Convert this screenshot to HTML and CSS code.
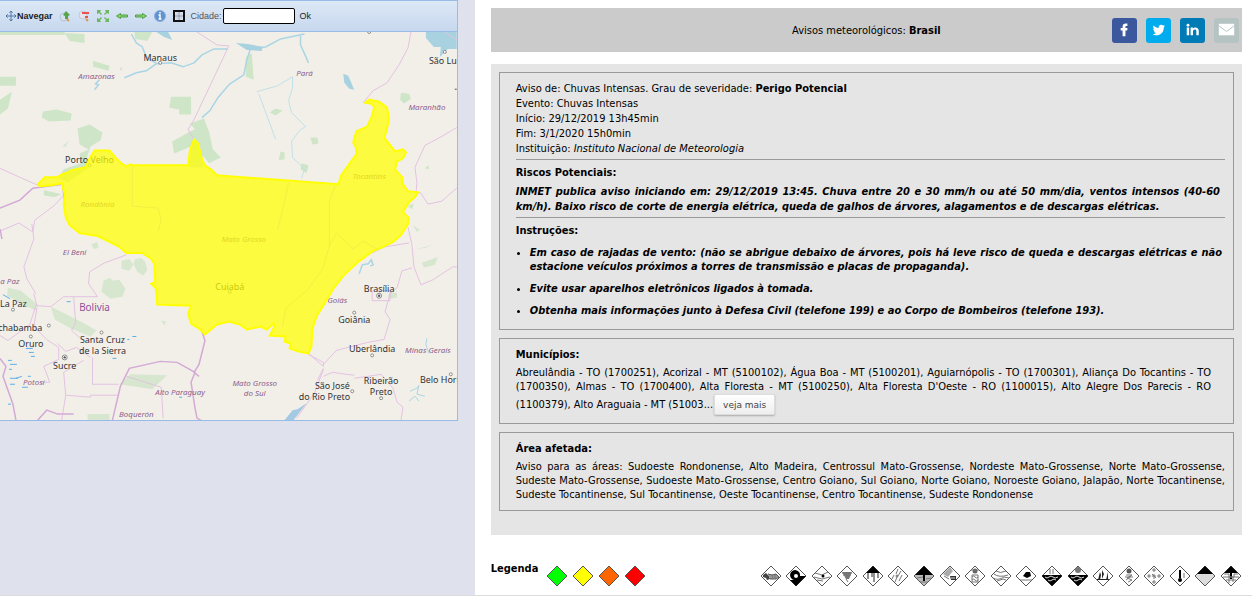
FILE: index.html
```html
<!DOCTYPE html>
<html lang="pt-BR">
<head>
<meta charset="utf-8">
<title>Avisos meteorológicos</title>
<link rel="stylesheet" href="styles.css">
</head>
<body>
<div class="page">
  <section class="map-side">
    <div class="map-widget">
      <div class="toolbar">
        <button class="tool navigate" type="button"><svg width="12" height="12" viewBox="0 0 12 12"><path d="M6 1v10M1 6h10M4.300 2.700 6 1l1.700 1.700M4.300 9.300 6 11l1.700-1.700M2.700 4.300 1 6l1.700 1.700M9.300 4.300 11 6 9.300 7.700" fill="none" stroke="#4c78a8"/></svg>Navegar</button>
        <button class="tool" type="button" aria-label="Aproximar"><svg width="14" height="14" viewBox="0 0 14 14"><circle cx="6" cy="8" r="4" fill="#d5e1ef" stroke="#b5c3d3"/><path d="m9 10 2 2" stroke="#d69a52" stroke-width="2"/><path d="m8 2 4 4-2 1v3H7V7L5 6z" fill="#56a54a"/></svg></button>
        <button class="tool" type="button" aria-label="Afastar"><svg width="14" height="14" viewBox="0 0 14 14"><circle cx="6" cy="6" r="4" fill="#e6e3ec" stroke="#c2c9d8"/><path d="m9 10 2 2" stroke="#d69a52" stroke-width="2"/><path d="M5 4h7M8 8h3" stroke="#ee5050" stroke-width="2"/></svg></button>
        <button class="tool" type="button" aria-label="Extensão total"><svg width="14" height="14" viewBox="0 0 14 14"><path d="M1 5V1h4L4 3l2 2-1 1-2-2zM9 1h4v4l-2-1-2 2-1-1 2-2zM1 9v4h4l-1-2 2-2-1-1-2 2zM13 9v4H9l1-2-2-2 1-1 2 2z" fill="#6cb85a"/></svg></button>
        <button class="tool" type="button" aria-label="Anterior"><svg width="14" height="14" viewBox="0 0 14 14"><path d="m1.500 7 4-2.500V6h7v2h-7v1.500z" fill="#8ed46e" stroke="#4f9f48"/></svg></button>
        <button class="tool" type="button" aria-label="Próximo"><svg width="14" height="14" viewBox="0 0 14 14"><path d="m12.500 7-4-2.500V6h-7v2h7v1.500z" fill="#8ed46e" stroke="#4f9f48"/></svg></button>
        <button class="tool" type="button" aria-label="Informações"><svg width="14" height="14" viewBox="0 0 14 14"><circle cx="7" cy="7" r="5.500" fill="#5f93cf" stroke="#8aaedb"/><path d="M5.500 6H7v4m-1.500 0h3M7 3v1.500" stroke="#fff" stroke-width="1.500" fill="none"/></svg></button>
        <button class="tool" type="button" aria-label="Grade"><svg width="14" height="14" viewBox="0 0 14 14"><path d="M2 2h10v10H2z" fill="#e3eaf3" stroke="#111" stroke-width="2"/><path d="M7 3v8M3 7h8" stroke="#8794a5"/><path d="M5 3v8M9 3v8M3 5h8M3 9h8" stroke="#bcc7d4" stroke-width=".5"/></svg></button>
        <label class="city-label" for="city">Cidade:</label>
        <input class="city" id="city" type="text">
        <button class="tool ok" type="button">Ok</button>
      </div>
      <svg class="map" viewBox="0 32 459 390" preserveAspectRatio="xMinYMin slice" role="img" aria-label="Mapa da área do aviso">
        <g fill="#cfe5c8">
          <path d="M0 32h65v3H0zM65 33l20 1v9l-15-2zM135 32h18l-5 9-12-2zM0 77h16v9H0zM0 100l12-8-4 17-8 6zM43 112l14-2 15 4-1 7-22 1-7-4zM93 61l17 5-1 5-15-4zM172 97h20v18h-12v-5l-10-2zM78 129l12-4 13 8-2 8-10 6-4 12 2 10-21 14-9-4 5-9 17-6-1-10 9-4-9-5zM173 142l18-10 5-2-5-6 14-5 5 13 4 18 8 8-12 6-6-8v12h-14l2-21-17 7zM44 191l18 4-8 3-10-2zM120 69l3-2-1 4zM63 147l6-6-3 6z"/>
          <path d="m247 57 6-4 2 27-8-3zM403 93l8 1 2 5-7 5-4-4zM271 113l6-4 7 2-7 5zM282 152l4 1v7l-6 1zM312 138l7 0 1 6-6 1zM303 164l7 2-2 8-6-4zM427 169l4-3v4zM410 207l6-3-2 6z"/>
          <path d="m92 245 6-2 1 6-5 1zM122 262l8-2 4 6-4 6-8-2zM136 260l6-1 4 4 2 8-4 6-6-4-4-8zM104 282l6-3 4 3 6-1 6 9-3 8-12 2-9-7zM8 289l13 3 17 14-1 6-12-5-18-10zM51 308l12 6 20 10 14 8-6 6-20-8-16-9zM131 376l37 1-15 14-33-5zM88 416h22v7H88zM162 322l5 1-2 4zM424 264l16-6-3 8-11 3zM391 294l8 0v5l-9 1zM415 226l7 5-3 2zM418 250l17-4-8 3z" opacity=".8"/>
        </g>
        <g fill="none" stroke="#a9d5e4" stroke-width="1.500">
          <path d="m125 78 12-5 10-2 10-7 15-1 12 4 11-4 8-8 12-6 14 0M132 34l5 9 6 4 4 10 11 7M203 118l8-7 8-13 11-13M100 80l-4 4 3 1-4 5"/>
          <path d="m230 85 15-10 3-15 4-12 15-1 15-8 24-5M302 36l0 9 5 11 3 7"/>
          <path d="M258 92l21-6 15-9v11l-4 13 3 12 14 14-6 4-8 11 1 16 12 12-3 9M260 94l9 24 8 22" stroke="#bfe0e8" stroke-width="1"/>
          <path d="m361 275 3-9 6-1 3-4 2 5-3 1"/><path d="m431 355-3-9 1-6M412 393l7-3 2-3-2 9 8 2M411 403l6-5 4 5" stroke-width="1"/>
        </g>
        <path d="m237 43 12 1 15 3-1 4-15-1zM345 74l5 2 6 14-5-1-5-6zM428 32h31v17l-9 0-8 8 1-10-7 0-8-9zM157 32h12l4 8-8-3z" fill="#a8d2df"/>
        <path d="M26 350h7M29 354h5M31 358h4M8 362h4M10 366h7M9 371h3M10 380h8M16 380l6-2M10 386h5M22 389h6M28 378h3M133 338h4M113 360h4M128 341h2M8 406h3M3 296l7 4M67 303h4M180 399h3" fill="none" stroke="#5aaeea"/>
        <g fill="none" stroke="#e3c2e2" stroke-width="1">
          <path d="M198 32l20 13 12 1-35 74-6 10 6 10M413 32l-3 16-9 17-12 18-14 8-10 12M459 128l-17 10-15 8-10 22 2 16-1 9 5 1 7 11 14-3 9-8 6-5M447 32l12 8M0 169l20 9 18 8M64 196l-9 10-20 15-2 12-14-9-19 8M32 225l2 15-10 28 3 12 9 15M34 295l3 12 14 1 13-10H98l-9-13 1-12 15-9 22-8M74 298l2 26-4 8 9 8M36 307l-6 19-22 16-8-5M37 310l-3 18 13 13 12 8 0 12-15 7 6 16-9 0M58 345l8 8 11-4 14 10M93 359v27h26M62 422l4-25 25 2 0-2h28M66 397l-2-23 20-12M127 378l35 11 2 31"/>
          <path d="m270 338 0 0M310 356l15 8 0 4M325 366l13-14 31-8 17-3 6-20-5-8 5-18 7-6 5-17 10-3M410 228l4 18 2 22 7 18 12-5 20-13 4 0M374 254l12-6 25-4M374 292v10h18v-10h-14M325 378l9-4 22 3M325 371l-9 24-18 25M356 380l27-4 12 14 4 14 6 5-2 13M311 356l14 12M325 370l-6 12"/>
        </g>
        <path d="m0 209 20-8 13-12 30-4 2 22M0 360l6 8-3 10 10 28 3 16M38 422l9-10 11 4 16 0M113 422l8-34 9-18 31-7 17 1 18 10-4 10 4 26 2 10 7 4 23 0M202 330l4 12-6 24-5 8 5 4M0 230l2 10" fill="none" stroke="#d3a9d5" stroke-width="1.500"/>
        <path d="m232 405-13 17h-9l8-10 5-1z" transform="translate(76 0)" fill="#a3c9e3"/>
        <g class="city-name">
          <text x="161" y="61">Manaus</text><text x="90" y="164">Porto Velho</text><text x="431" y="64" text-anchor="start" class="from-left">São Luís</text>
          <text x="0" y="308" class="from-left">La Paz</text><text x="-13" y="332" class="from-left">Cochabamba</text><text x="31" y="349">Oruro</text><text x="65" y="371">Sucre</text>
          <text x="103" y="345">Santa Cruz</text><text x="103" y="356">de la Sierra</text><text x="231" y="291">Cuiabá</text><text x="381" y="293">Brasília</text><text x="356" y="324">Goiânia</text><text x="374" y="354">Uberlândia</text>
          <text x="334" y="391">São José</text><text x="326" y="402">do Rio Preto</text><text x="383" y="386">Ribeirão</text><text x="383" y="397">Preto</text><text x="422" y="385" class="from-left">Belo Horizonte</text>
        </g>
        <g class="region-name">
          <text x="97" y="79">Amazonas</text><text x="306" y="76">Pará</text><text x="429" y="110">Maranhão</text><text x="371" y="180">Tocantins</text><text x="98" y="208">Rondônia</text><text x="75" y="256">El Beni</text><text x="8" y="285">La Paz</text>
          <text x="245" y="243">Mato Grosso</text><text x="339" y="304">Goiás</text><text x="430" y="355">Minas Gerais</text><text x="34" y="387">Potosí</text><text x="181" y="397">Alto Paraguay</text><text x="137" y="419">Boquerón</text><text x="256" y="388">Mato Grosso</text><text x="256" y="398">do Sul</text>
        </g>
        <text class="country-name" x="95" y="312">Bolivia</text>
        <g fill="#fff" stroke="#888"><circle cx="161" cy="63" r="1.500"/><circle cx="90" cy="166" r="1.500"/><circle cx="447" cy="52" r="1.500"/><circle cx="371" cy="32" r="1.500"/><circle cx="13" cy="311" r="1.500"/><circle cx="49" cy="327" r="1.500"/><circle cx="31" cy="338" r="1.500"/><circle cx="102" cy="334" r="1.500"/><circle cx="356" cy="314" r="1.500"/><circle cx="374" cy="357" r="1.500"/><circle cx="354" cy="393" r="1.500"/><circle cx="383" cy="400" r="1.500"/><circle cx="453" cy="376" r="1.500"/><circle cx="231" cy="293" r="1.500"/><circle cx="65" cy="359" r="2.500"/><circle cx="381" cy="297" r="2.500"/></g>
        <g fill="#555"><circle cx="65" cy="359" r="1.200"/><circle cx="381" cy="297" r="1.200"/><path d="M457 89h2v1h-2z"/></g>
        <path class="warning-area" d="M38 185l7-7h12l5-3 7-2 2-2 15-3 4-9 5-8h15l6 7 6 6 5 3 4-2 3 1h55l2-16 4-10 4 4 4 16 3 6 7 5 5 5 12 1 110 8 3-9 7-10 8-11v-6l-3-6 3-11 11-5 5-11 2-9-3-3-6-1 4-3 10 2 8 6 2 12-3 13-2 5 11 14 8-2 3 3-3 6-6 3-2 8 7 8 1 7 5 7 10 1-3 5-6 5-6 10 6 6-1 6-7 11-8 7-12 6-8 3-15 11-15 14-10 13-9 15-8 13-4 12-1 18-3 7-10-2-9-3 1-5-6-2 1-5-16-1 5-9-1-3-7 6-6-3-14 3-7-5-11-3-12 3-12 10-6-6-8-5-3-10 3-8-34-1-1-16-5-5 4-2-1-18-3-5-9-6h-16l-7-6-12-6-10-5-18-3-10-8-4-8-2-13 1-10-3-11-10 2-12 1z"/>
        <g fill="none" stroke="#f1ef45"><path d="M133 167v40l26 2 3 12-3 11M290 183l-4 20-7 28M337 186l-6 16 0 45 7-13 17 16 10-8 15 9M331 247l-7 24-15 20-22 19-3 18"/></g>
      </svg>
    </div>
  </section>

  <main class="content">
    <header class="title-bar">
      <h1 class="title">Avisos meteorológicos: <b>Brasil</b></h1>
      <nav class="social" aria-label="Compartilhar">
        <a class="share facebook" href="#" aria-label="Facebook"><svg viewBox="0 0 26 26"><path d="M11 19v-6H9v-2.500h2V9c0-2 1.300-3.200 3.400-3.200H16v2.500h-1c-.8 0-1 .4-1 1v1.200h2.100l-.3 2.500H14v6z"/></svg></a>
        <a class="share twitter" href="#" aria-label="Twitter"><svg viewBox="0 0 26 26"><path d="M7 16.700c1.500.1 2.700-.2 3.800-1-1.300-.1-2.100-.8-2.500-1.900h1.200c-1.300-.4-2-1.400-2-2.700l1.200.3C7.400 10.500 7.200 9 7.900 7.800c1.400 1.600 3.100 2.500 5.300 2.600-.4-1.800.9-3.300 2.600-3.300.8 0 1.400.3 1.900.8l1.700-.6-1.100 1.500 1.500-.4-1.300 1.400c.1 4.500-3.100 8.200-7.700 8.200-1.500 0-2.800-.4-3.800-1.300z"/></svg></a>
        <a class="share linkedin" href="#" aria-label="LinkedIn"><svg viewBox="0 0 26 26"><path d="M7 10h2.500v8H7zM11 10h2.400v1.100c.5-.8 1.300-1.300 2.500-1.300 2.300 0 3.600 1.400 3.600 3.600V18H17v-4.200c0-1.200-.5-1.900-1.500-1.900-1.200 0-2 .8-2 2.100v4H11z"/><circle cx="8.300" cy="7.500" r="1.500"/></svg></a>
        <a class="share email" href="#" aria-label="E-mail"><svg viewBox="0 0 26 26"><path d="M5 6h16v12H5z"/><path d="m5 8 6.500 5c1 .8 2 .8 3 0L21 8" fill="none" stroke="#b5c3c3"/></svg></a>
      </nav>
    </header>

    <div class="panel">
      <section class="box">
        <p class="facts">Aviso de: Chuvas Intensas. Grau de severidade: <b>Perigo Potencial</b><br>Evento: Chuvas Intensas<br>Início: 29/12/2019 13h45min<br>Fim: 3/1/2020 15h0min<br>Instituição: <i>Instituto Nacional de Meteorologia</i></p>
        <hr class="rule">
        <h2 class="heading">Riscos Potenciais:</h2>
        <p class="risk">INMET publica aviso iniciando em: 29/12/2019 13:45. Chuva entre 20 e 30 mm/h ou até 50 mm/dia, ventos intensos (40-60 km/h). Baixo risco de corte de energia elétrica, queda de galhos de árvores, alagamentos e de descargas elétricas.</p>
        <hr class="rule">
        <h2 class="heading">Instruções:</h2>
        <ul class="steps">
          <li>Em caso de rajadas de vento: (não se abrigue debaixo de árvores, pois há leve risco de queda e descargas elétricas e não estacione veículos próximos a torres de transmissão e placas de propaganda).</li>
          <li>Evite usar aparelhos eletrônicos ligados à tomada.</li>
          <li>Obtenha mais informações junto à Defesa Civil (telefone 199) e ao Corpo de Bombeiros (telefone 193).</li>
        </ul>
      </section>
      <section class="box cities">
        <h2 class="heading">Municípios:</h2>
        <p class="list">Abreulândia - TO (1700251), Acorizal - MT (5100102), Água Boa - MT (5100201), Aguiarnópolis - TO (1700301), Aliança Do Tocantins - TO (1700350), Almas - TO (1700400), Alta Floresta - MT (5100250), Alta Floresta D'Oeste - RO (1100015), Alto Alegre Dos Parecis - RO (1100379), Alto Araguaia - MT (51003...<button class="more" type="button">veja mais</button></p>
      </section>
      <section class="box">
        <h2 class="heading">Área afetada:</h2>
        <p class="list">Aviso para as áreas: Sudoeste Rondonense, Alto Madeira, Centrossul Mato-Grossense, Nordeste Mato-Grossense, Norte Mato-Grossense, Sudeste Mato-Grossense, Sudoeste Mato-Grossense, Centro Goiano, Sul Goiano, Norte Goiano, Noroeste Goiano, Jalapão, Norte Tocantinense, Sudeste Tocantinense, Sul Tocantinense, Oeste Tocantinense, Centro Tocantinense, Sudeste Rondonense</p>
      </section>
    </div>

    <footer class="legend">
      <b class="legend-title">Legenda</b>
      <div class="levels">
        <svg class="sign" viewBox="0 0 22 22"><path class="level" fill="#0f0" d="m11 1 10 10-10 10L1 11z"/></svg>
        <svg class="sign" viewBox="0 0 22 22"><path class="level" fill="#ff0" d="m11 1 10 10-10 10L1 11z"/></svg>
        <svg class="sign" viewBox="0 0 22 22"><path class="level" fill="#f60" d="m11 1 10 10-10 10L1 11z"/></svg>
        <svg class="sign" viewBox="0 0 22 22"><path class="level" fill="red" d="m11 1 10 10-10 10L1 11z"/></svg>
      </div>
      <div class="events">
        <svg class="sign" viewBox="0 0 22 22"><path class="edge" d="m11 1 10 10-10 10L1 11z"/><path d="m3 10 3-2 3 3 1 3-3 1-1-2-3-1z" fill="#444"/><path d="m8 9 4 1 4-1 3 3-3 2-6 0" fill="#999" stroke="#555"/><path class="thin" d="m12 10 1 4M15 10v3"/></svg>
        <svg class="sign" viewBox="0 0 22 22"><path class="edge" d="m11 1 10 10-10 10L1 11z"/><path d="M21 11 11 21l-6-6h4a5 5 0 1 1 6-4z"/><circle cx="11" cy="11" r="2" fill="#fff"/></svg>
        <svg class="sign" viewBox="0 0 22 22"><path class="edge" d="m11 1 10 10-10 10L1 11z"/><path class="thin" d="m4 8 7 2 6-3M3 12l8 2 8-2M6 15l6 1"/><circle cx="12" cy="11" r="1.500"/></svg>
        <svg class="sign" viewBox="0 0 22 22"><path class="edge" d="m11 1 10 10-10 10L1 11z"/><path d="M6 7h10l-3 7h-3z" fill="#777"/><path class="thin" d="M6 8h10M7 10h8M10 14l2 3"/></svg>
        <svg class="sign" viewBox="0 0 22 22"><path class="edge" d="m11 1 10 10-10 10L1 11z"/><path d="m11 1 7 7H4z"/><path d="M6 8v6M10 8v4M12 8v9M16 8v5" stroke="#222"/></svg>
        <svg class="sign" viewBox="0 0 22 22"><path class="edge" d="m11 1 10 10-10 10L1 11z"/><path class="thin" d="m11 4-2 5M14 6l-3 5M7 10l-2 4M10 12l-2 5M15 10l-3 6"/><circle cx="10" cy="11" r="1.500" fill="#888"/></svg>
        <svg class="sign" viewBox="0 0 22 22"><path d="M2 10h18l1 1-10 10L1 11z" fill="#bbb"/><path class="edge open" d="m11 1 10 10-10 10L1 11z"/><path d="m11 1 9 9H2zM10 9h2v7h-2z"/><path class="thin" d="m4 13 6-1M13 14l5-1M7 17h8"/></svg>
        <svg class="sign" viewBox="0 0 22 22"><path class="edge" d="m11 1 10 10-10 10L1 11z"/><path d="m11 2-7 7 5 3 5-6z" fill="#aaa"/><path d="M11 11h6v4h-5z" fill="#333"/><path class="thin" d="m5 11 5 3"/><path class="wave" d="M12 13h4"/></svg>
        <svg class="sign" viewBox="0 0 22 22"><path class="edge" d="m11 1 10 10-10 10L1 11z"/><circle cx="11" cy="6" r="2.500" fill="#666"/><path class="thin" d="M7 5h8M8 12q1.500-2 3 0t3 0M8 15q1.500-2 3 0t3 0M8 10h6v7H8z"/></svg>
        <svg class="sign" viewBox="0 0 22 22"><path class="edge" d="m11 1 10 10-10 10L1 11z"/><path class="thin" d="M6 6q4 3 10 0M4 9q5 4 14 1M3 13q5 3 11-1l5 1M7 16l6-2 3 1"/></svg>
        <svg class="sign" viewBox="0 0 22 22"><path class="edge" d="m11 1 10 10-10 10L1 11z"/><path d="m8 11 3-4h4l1 4-4 2z"/><path class="thin" d="M5 15h12"/></svg>
        <svg class="sign" viewBox="0 0 22 22"><path class="edge" d="m11 1 10 10-10 10L1 11z"/><path d="M2 10h18l1 1-10 10L1 11z"/><path d="M9 4v5M12 4v5" stroke="#777"/><path class="wave" d="M4 12q2 2 4 0t4 0 5 0M7 15q2 2 4 0t4 0"/></svg>
        <svg class="sign" viewBox="0 0 22 22"><path class="edge" d="m11 1 10 10-10 10L1 11z"/><path d="M2 10h18l1 1-10 10L1 11z"/><circle cx="11" cy="5" r="3" fill="#777"/><path class="wave" d="M4 12q2 2 4 0t4 0 5 0M7 15q2 2 4 0t4 0"/></svg>
        <svg class="sign" viewBox="0 0 22 22"><path class="edge" d="m11 1 10 10-10 10L1 11z"/><path d="m6 15 2-8 1 3-1 5zM10 14V5l2 4zM14 15l2-8v8zM5 14h12v1H5z" fill="#222"/></svg>
        <svg class="sign" viewBox="0 0 22 22"><path class="edge" d="m11 1 10 10-10 10L1 11z"/><circle cx="11" cy="6" r="2.500" fill="#555"/><path class="thin" d="M8 10h6l-5 3 5 2-4 2M8 15l5-4M7 12h8"/></svg>
        <svg class="sign" viewBox="0 0 22 22"><path class="edge" d="m11 1 10 10-10 10L1 11z"/><path class="thin" d="M11 3v4M9 5h4M6 9v4M4 11h4M11 9v5M9 11h4M9 9l4 4M16 9v4M14 11h4M11 15v4M9 17h4"/></svg>
        <svg class="sign" viewBox="0 0 22 22"><path class="edge" d="m11 1 10 10-10 10L1 11z"/><path d="M10 5h2v8h-2z"/><circle cx="11" cy="15" r="2"/><path class="thin" d="M15 8v5"/></svg>
        <svg class="sign" viewBox="0 0 22 22"><path d="m11 1 10 10-10 10L1 11z" fill="#ddd"/><path class="edge open" d="m11 1 10 10-10 10L1 11z"/><path d="m11 1 8 8H3z"/></svg>
        <svg class="sign" viewBox="0 0 22 22"><path class="edge" d="m11 1 10 10-10 10L1 11z"/><path d="m11 1 7 7H4zM10 8h2v6h-2z"/><path class="thin" d="M4 9h5v3h5V9h4M3 12h16M6 15h10M9 12v6M13 12v5"/></svg>
      </div>
    </footer>
  </main>
</div>
</body>
</html>
```
FILE: styles.css
```css
* { box-sizing: border-box; }
body {
  margin: 0;
  background: #fff;
  color: #000;
  font: 11px/15px "DejaVu Sans Condensed", "DejaVu Sans", sans-serif;
}
button { font: inherit; color: inherit; }
.page {
  display: flex;
  min-height: 596px;
  border-bottom: 1px solid #ddd;
}
.map-side {
  flex: 0 0 38%;
  padding-right: 17px;
  border-right: 1px solid #fff;
  background: #dfe2ec;
  background-clip: padding-box;
}
.map-widget {
  border: solid #99bbe8;
  border-width: 1px 1px 1px 0;
}
.toolbar {
  display: flex;
  align-items: center;
  gap: 5px;
  height: 31px;
  padding: 0 5px;
  border-bottom: 1px solid #99bbe8;
  background: linear-gradient(#dce8f6, #c7d8ee);
  font: 9px/14px "Liberation Sans", Arial, sans-serif;
  color: #222;
}
.tool {
  display: flex;
  align-items: center;
  padding: 0;
  border: 0;
  background: none;
}
.tool svg { display: block; }
.navigate { font-weight: bold; }
.city-label { color: #555; }
.city {
  width: 72px;
  height: 16px;
  margin-left: -4px;
  border: 1px solid #000;
  border-radius: 2px;
  background: #fff;
}
.map {
  display: block;
  width: 100%;
  background: #f2efe9;
  font-family: "Noto Sans", sans-serif;
}
.city-name { font-size: 9px; fill: #333; text-anchor: middle; }
.from-left { text-anchor: start; }
.region-name { font-size: 8px; font-style: italic; fill: #8d618b; text-anchor: middle; }
.country-name { font-size: 10px; fill: #8d4f9b; text-anchor: middle; }
.warning-area { fill: #ff0; fill-opacity: .73; stroke: #ff0; stroke-width: 2; }

.content {
  flex: 1;
  min-width: 0;
  padding: 8px 10px 0 15px;
}
.title-bar {
  display: grid;
  grid-template-columns: 1fr auto 1fr;
  align-items: center;
  height: 44px;
  margin-bottom: 12px;
  background: #cbcbcb;
}
.title { grid-column: 2; margin: 0; font-size: 11px; font-weight: normal; }
.social { display: flex; justify-content: flex-end; gap: 9px; padding-right: 3px; }
.share { width: 25px; height: 25px; border-radius: 3px; }
.share svg { display: block; fill: #fff; }
.facebook { background: #3b579d; }
.twitter { background: #00aced; }
.linkedin { background: #007bb6; }
.email { background: #b5c3c3; }

.panel {
  display: flex;
  flex-direction: column;
  gap: 8px;
  padding: 8px 8px 24px;
  background: #e5e5e5;
}
.box { padding: 8px 8px 8px 16px; border: 1px solid #999; }
.facts, .risk, .list { margin: 0; }
.rule { margin: 3px 0 5px; border: 0; border-top: 1px solid #999; }
.heading { margin: 0 0 4px; font-size: 11px; line-height: 15px; }
.risk { padding-right: 5px; font-weight: bold; font-style: italic; text-align: justify; }
.steps {
  margin: 0;
  padding: 4px 3px 3px 14px;
  font-weight: bold;
  font-style: italic;
  line-height: 14px;
  text-align: justify;
}
.steps li { margin-bottom: 8px; }
.steps li:last-child { margin-bottom: 0; }
.list { line-height: 14px; text-align: justify; }
.cities { padding-right: 22px; }
.more {
  height: 21px;
  margin-left: 1px;
  padding: 0 8px;
  border: 1px solid #ddd;
  border-radius: 2px;
  background: linear-gradient(#fff, #eee);
  box-shadow: 0 1px 2px #aaa;
  font-family: "DejaVu Sans", sans-serif;
  font-size: 9px;
  color: #444;
}

.legend { display: flex; padding-top: 26px; }
.legend-title { margin-right: 8px; }
.levels { display: flex; gap: 4px; padding-top: 4px; }
.events {
  display: grid;
  grid-template-columns: repeat(19, 1fr);
  justify-items: end;
  width: 486px;
  margin-left: auto;
  padding-top: 4px;
}
.sign { display: block; width: 22px; height: 22px; }
.sign path { stroke-linejoin: round; }
.level { stroke: #555; }
.edge { fill: #fff; stroke: #555; }
.open { fill: none; }
.thin { fill: none; stroke: #777; }
.wave { fill: none; stroke: #ddd; }
```
